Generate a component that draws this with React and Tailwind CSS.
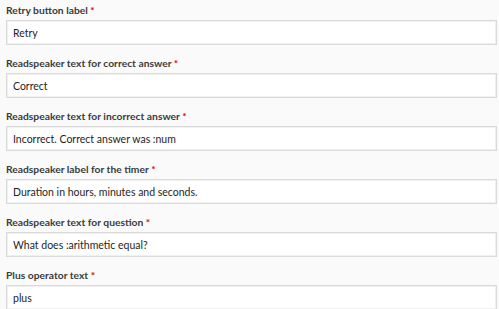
import React from 'react';

const fields = [
    { label: 'Retry button label', value: 'Retry' },
    { label: 'Readspeaker text for correct answer', value: 'Correct' },
    { label: 'Readspeaker text for incorrect answer', value: 'Incorrect. Correct answer was :num' },
    { label: 'Readspeaker label for the timer', value: 'Duration in hours, minutes and seconds.' },
    { label: 'Readspeaker text for question', value: 'What does :arithmetic equal?' },
    { label: 'Plus operator text', value: 'plus' },
];

function Field({ label, value }) {
    return (
        <div className="flex flex-col">
            <label className="h-[20px] pl-[6px] pt-[3px] text-[10.3px] font-bold leading-[14px] text-[#3a3a3a]">
                {label} <span className="text-[#da0001]">*</span>
            </label>
            <input
                readOnly
                value={value}
                className="mr-[2px] ml-[6px] h-[25px] border border-[#dadada] bg-white px-[6px] text-[10.5px] text-[#1e1e1e] shadow-[inset_0_0_0_1px_#f0f0f0] outline-none"
            />
        </div>
    );
}

export default function App() {
    return (
        <div className="flex h-[309px] w-[499px] flex-col gap-[8px] overflow-hidden bg-[#fafafa] font-['Lato',sans-serif]">
            {fields.map((f) => (
                <Field key={f.label} {...f} />
            ))}
        </div>
    );
}
